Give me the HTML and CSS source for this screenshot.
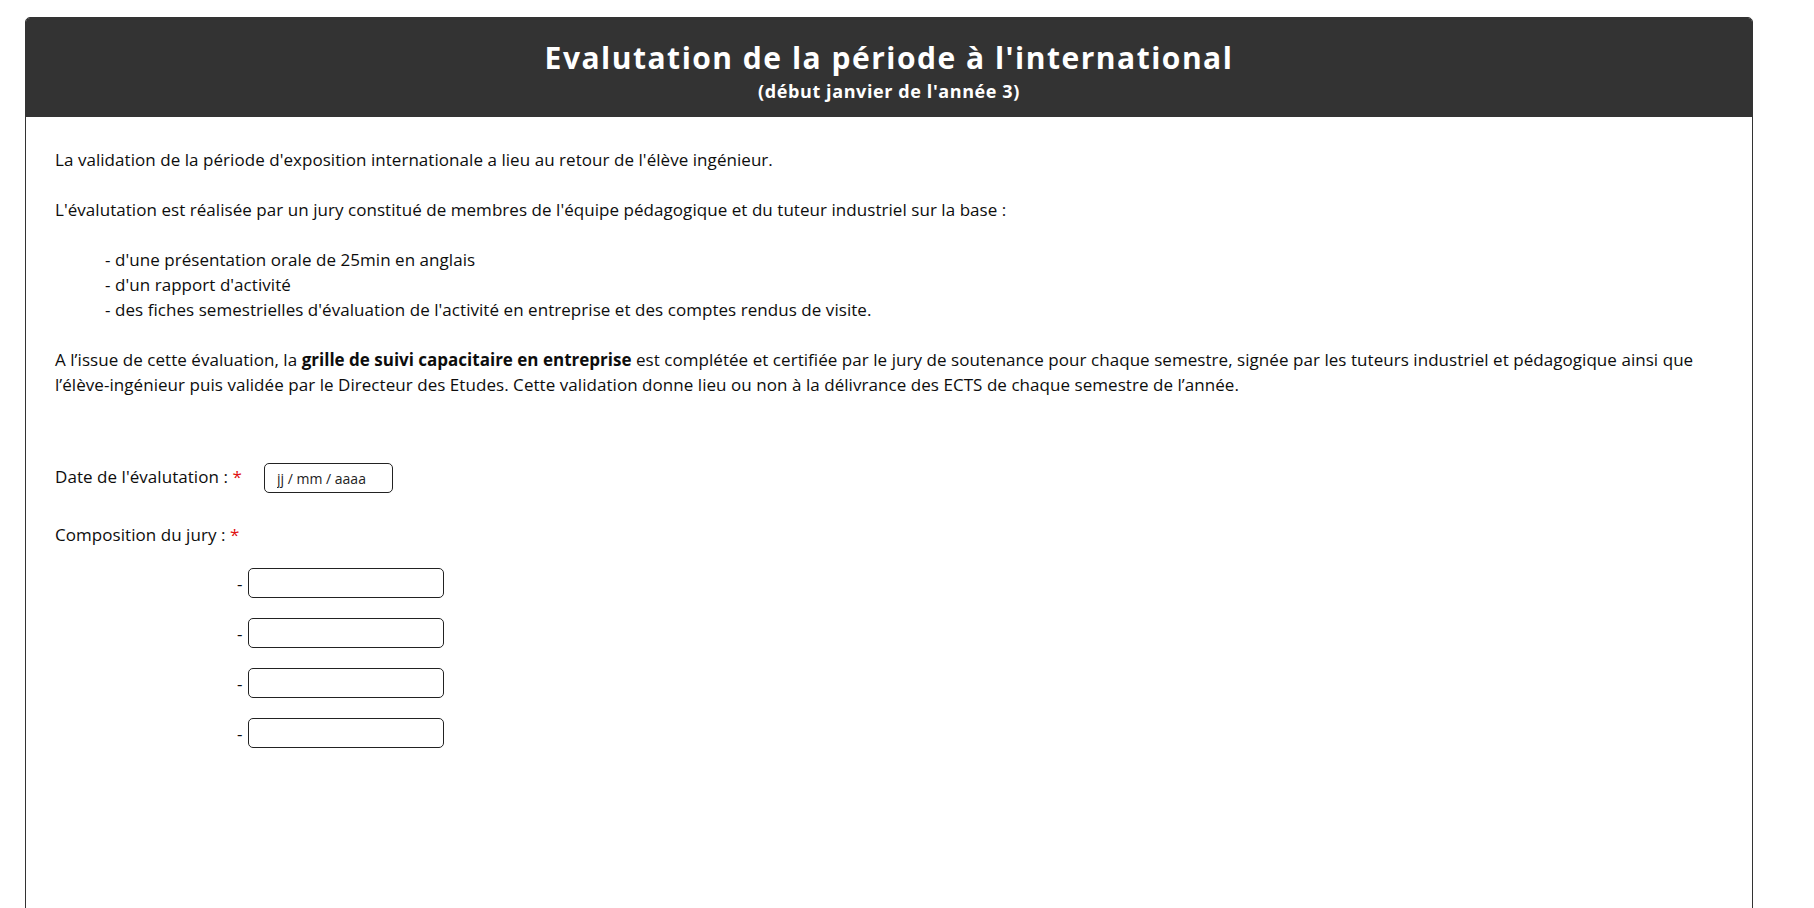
FILE: index.html
```html
<!DOCTYPE html>
<html lang="fr">
<head>
<meta charset="utf-8">
<title>Evalutation de la période à l'international</title>
<link rel="stylesheet" href="styles.css">
</head>
<body>
<div class="card">
  <header class="card-head">
    <h1 class="title">Evalutation de la période à l'international</h1>
    <p class="subtitle">(début janvier de l'année 3)</p>
  </header>
  <div class="card-body">
    <p class="para">La validation de la période d'exposition internationale a lieu au retour de l'élève ingénieur.</p>
    <p class="para">L'évalutation est réalisée par un jury constitué de membres de l'équipe pédagogique et du tuteur industriel sur la base :</p>
    <ul class="list">
      <li>- d'une présentation orale de 25min en anglais</li>
      <li>- d'un rapport d'activité</li>
      <li>- des fiches semestrielles d'évaluation de l'activité en entreprise et des comptes rendus de visite.</li>
    </ul>
    <p class="para">A l’issue de cette évaluation, la <strong>grille de suivi capacitaire en entreprise</strong> est complétée et certifiée par le jury de soutenance pour chaque semestre, signée par les tuteurs industriel et pédagogique ainsi que l’élève-ingénieur puis validée par le Directeur des Etudes. Cette validation donne lieu ou non à la délivrance des ECTS de chaque semestre de l’année.</p>

    <div class="date-row">
      <label class="date-label" for="date">Date de l'évalutation : <span class="req">*</span></label>
      <input class="date-input" id="date" type="text" placeholder="jj / mm / aaaa">
    </div>

    <p class="jury-label">Composition du jury : <span class="req">*</span></p>
    <div class="jury-list">
      <div class="jury-row"><span class="dash">-</span><input class="jury-input" type="text"></div>
      <div class="jury-row"><span class="dash">-</span><input class="jury-input" type="text"></div>
      <div class="jury-row"><span class="dash">-</span><input class="jury-input" type="text"></div>
      <div class="jury-row"><span class="dash">-</span><input class="jury-input" type="text"></div>
    </div>
  </div>
</div>
</body>
</html>
```

FILE: styles.css
```css
* { box-sizing: border-box; }

html, body {
  margin: 0;
  padding: 0;
  background: #ffffff;
}

body {
  font-family: "Open Sans", "Liberation Sans", sans-serif;
  font-size: 17px;
  line-height: 25px;
  letter-spacing: 0.05px;
  color: #0d0d0d;
}

.card {
  margin: 17px 0 0 25px;
  width: 1728px;
  border: 1px solid #333333;
  border-radius: 5px 5px 0 0;
  min-height: 1000px;
  overflow: hidden;
}

.card-head {
  background: #333333;
  color: #ffffff;
  height: 99px;
  display: flex;
  flex-direction: column;
  align-items: center;
  padding-top: 19px;
}

.title {
  margin: 0;
  font-size: 30px;
  line-height: 42px;
  font-weight: 700;
  letter-spacing: 1.5px;
}

.subtitle {
  margin: 0;
  font-size: 18px;
  line-height: 24px;
  font-weight: 700;
  letter-spacing: 0.6px;
}

.card-body {
  padding: 30px 30px 0 29px;
}

.para {
  margin: 0 0 25px 0;
}

.para strong {
  font-weight: 700;
  letter-spacing: 0;
}

.list {
  list-style: none;
  margin: 0 0 25px 0;
  padding: 0 0 0 50px;
}

.req {
  color: #e01010;
}

.date-row {
  display: flex;
  align-items: center;
  margin-top: 66px;
  height: 30px;
}

.date-label {
  flex: none;
  width: 209px;
  padding-bottom: 3px;
}

.date-input {
  width: 129px;
  height: 30px;
  border: 1px solid #222222;
  border-radius: 5px;
  padding: 0 0 0 12px;
  font-family: "Open Sans", "Liberation Sans", sans-serif;
  font-size: 14px;
  color: #222222;
  background: #ffffff;
}

.date-input::placeholder {
  color: #222222;
}

.jury-label {
  margin: 29px 0 0 0;
}

.jury-list {
  display: flex;
  flex-direction: column;
  gap: 20px;
  margin: 21px 0 0 182px;
}

.jury-row {
  display: flex;
  align-items: center;
  gap: 5px;
  height: 30px;
}

.dash {
  font-size: 17px;
}

.jury-input {
  width: 196px;
  height: 30px;
  border: 1px solid #222222;
  border-radius: 5px;
  background: #ffffff;
}
```
